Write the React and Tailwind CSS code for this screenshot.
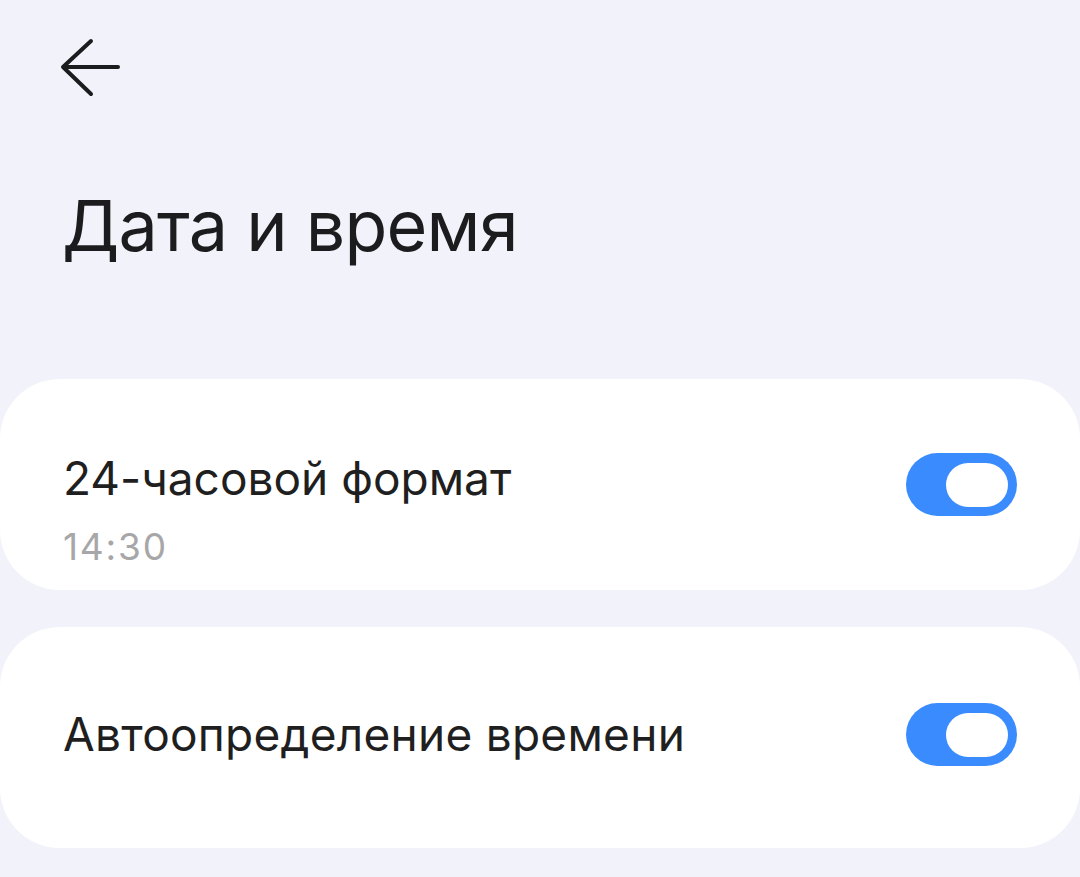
import React from 'react'

function Toggle() {
  return (
    <div className="w-[111px] h-[63px] rounded-full bg-[#3a8bfe] flex items-center justify-end pr-[9px] shrink-0">
      <div className="w-[62px] h-[44px] rounded-full bg-white" />
    </div>
  )
}

function BackArrow() {
  return (
    <svg width="64" height="64" viewBox="0 0 64 64" fill="none">
      <path
        d="M60 32H6M33 6L5 32L33 59"
        stroke="#1c1c1e"
        strokeWidth="4"
        strokeLinecap="round"
        strokeLinejoin="round"
      />
    </svg>
  )
}

export default function App() {
  return (
    <div
      className="w-[1080px] h-[877px] bg-[#f2f3fa] overflow-hidden"
      style={{ fontFamily: 'Inter, "Noto Sans", sans-serif' }}
    >
      <div className="pl-[58px] pt-[35px] h-[99px]">
        <BackArrow />
      </div>

      <h1 className="mt-[92px] pl-[62px] text-[70px] leading-none tracking-[-0.8px] text-[#1c1c1e] font-normal">
        Дата и время
      </h1>

      <div className="mt-[118px] h-[211px] bg-white rounded-[60px] px-[63px] pt-[74px] flex justify-between items-start">
        <div className="pt-[2px]">
          <div className="text-[46px] leading-none text-[#1f1f1f]">24-часовой формат</div>
          <div className="mt-[27px] text-[37px] leading-none tracking-[1.8px] text-[#a7a7a9]">14:30</div>
        </div>
        <Toggle />
      </div>

      <div className="mt-[37px] h-[221px] bg-white rounded-[60px] px-[63px] pt-[76px] flex justify-between items-start">
        <div className="pt-[8px] text-[46px] leading-none tracking-[0.25px] text-[#1f1f1f]">
          Автоопределение времени
        </div>
        <Toggle />
      </div>
    </div>
  )
}
